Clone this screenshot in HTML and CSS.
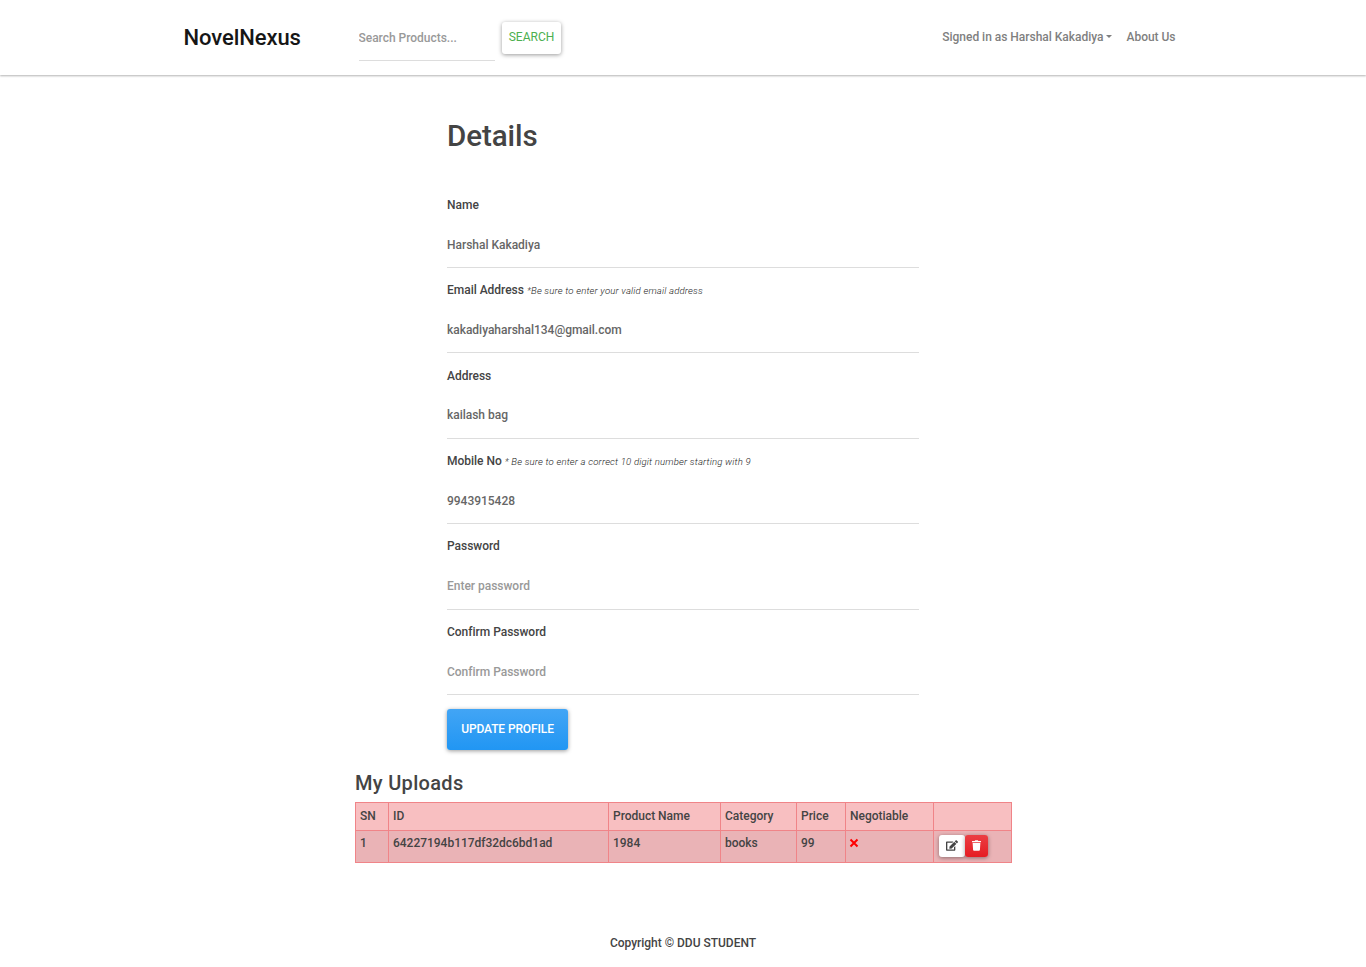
FILE: index.html
```html
<!DOCTYPE html>
<html lang="en">
<head>
<meta charset="utf-8">
<title>NovelNexus</title>
<link rel="stylesheet" href="styles.css">
</head>
<body>
<header class="navbar">
  <div class="navbar-inner">
    <a class="brand">NovelNexus</a>
    <form class="search">
      <input class="search-input" type="text" placeholder="Search Products...">
      <button class="btn search-btn" type="button">Search</button>
    </form>
    <nav class="links">
      <a class="link account">Signed in as Harshal Kakadiya</a>
      <a class="link">About Us</a>
    </nav>
  </div>
</header>
<main>
  <form class="details">
    <h1 class="title">Details</h1>
    <div class="field"><label class="label">Name</label><input class="input" type="text" value="Harshal Kakadiya"></div>
    <div class="field"><label class="label">Email Address <i class="hint">*Be sure to enter your valid email address</i></label><input class="input" type="text" value="kakadiyaharshal134@gmail.com"></div>
    <div class="field"><label class="label">Address</label><input class="input" type="text" value="kailash bag"></div>
    <div class="field"><label class="label">Mobile No <i class="hint">* Be sure to enter a correct 10 digit number starting with 9</i></label><input class="input" type="text" value="9943915428"></div>
    <div class="field"><label class="label">Password</label><input class="input" type="password" placeholder="Enter password"></div>
    <div class="field"><label class="label">Confirm Password</label><input class="input" type="password" placeholder="Confirm Password"></div>
    <button class="btn update-btn" type="button">Update Profile</button>
  </form>
  <section class="uploads">
    <h2 class="subtitle">My Uploads</h2>
    <table class="table">
      <colgroup><col class="c-sn"><col class="c-id"><col class="c-name"><col class="c-cat"><col class="c-price"><col class="c-neg"><col class="c-act"></colgroup>
      <thead><tr><th>SN</th><th>ID</th><th>Product Name</th><th>Category</th><th>Price</th><th>Negotiable</th><th></th></tr></thead>
      <tbody><tr>
        <td>1</td><td>64227194b117df32dc6bd1ad</td><td>1984</td><td>books</td><td>99</td>
        <td><svg class="cross" viewBox="0 0 10 10"><path d="M1.5 1.5 8.5 8.5M8.5 1.5 1.5 8.5"/></svg></td>
        <td><div class="actions">
          <button class="btn icon-btn edit" type="button"><svg class="edit-icon" viewBox="0 0 576 512"><path d="M402.6 83.2l90.2 90.2c3.8 3.8 3.8 10 0 13.8L274.400 405.600l-92.800 10.300c-12.400 1.400-22.900-9.100-21.500-21.500l10.300-92.800L388.800 83.200c3.800-3.800 10-3.800 13.800 0zm162-22.900l-48.800-48.800c-15.200-15.200-39.900-15.200-55.200 0l-35.400 35.400c-3.800 3.800-3.800 10 0 13.800l90.200 90.200c3.800 3.800 10 3.800 13.800 0l35.400-35.400c15.200-15.300 15.200-40 0-55.200zM384 346.200V448H64V128h229.800c3.200 0 6.200-1.300 8.500-3.500l40-40c7.600-7.600 2.200-20.500-8.500-20.500H48C21.500 64 0 85.500 0 112v352c0 26.500 21.500 48 48 48h352c26.500 0 48-21.500 48-48V306.200c0-10.700-12.900-16-20.500-8.500l-40 40c-2.200 2.300-3.500 5.300-3.500 8.500z"/></svg></button>
          <button class="btn icon-btn delete" type="button"><svg class="trash-icon" viewBox="0 0 448 512"><path d="M432 32H312l-9.400-18.700A24 24 0 0 0 281.100 0H166.800a23.700 23.700 0 0 0-21.400 13.300L136 32H16A16 16 0 0 0 0 48v32a16 16 0 0 0 16 16h416a16 16 0 0 0 16-16V48a16 16 0 0 0-16-16zM53.200 467a48 48 0 0 0 47.900 45h245.800a48 48 0 0 0 47.900-45L416 128H32z"/></svg></button>
        </div></td>
      </tr></tbody>
    </table>
  </section>
</main>
<footer class="footer">Copyright © DDU STUDENT</footer>
</body>
</html>
```

FILE: styles.css
```css
* { box-sizing: border-box; }
body { margin: 0; background: #fff; color: #444; font: 500 12px/18px Roboto, sans-serif; letter-spacing: -0.02px; }
.navbar { height: 75px; background: #fff; box-shadow: 0 1px 2px rgba(0, 0, 0, 0.3); }
.navbar-inner { width: 999px; height: 75px; margin: 0 auto; display: flex; align-items: center; }
.brand { width: 175px; color: #161616; font-size: 22px; line-height: 30px; font-weight: 500; letter-spacing: -0.08px; }
.search { display: flex; align-items: flex-start; height: 46px; margin-top: 1px; }
.search-input { width: 136px; height: 46px; margin-right: 7px; }
.search-input, .input { display: block; padding: 0; border: 0; border-radius: 0; background: transparent; color: #666; font: inherit; letter-spacing: inherit; outline: 0; box-shadow: inset 0 -1px 0 #ddd; }
.search-input::placeholder, .input::placeholder { color: #999; opacity: 1; }
.btn { border: 0; border-radius: 3px; font: 400 12px/18px Roboto, sans-serif; text-transform: uppercase; box-shadow: 0 1px 4px rgba(0, 0, 0, 0.4); padding: 0; }
.search-btn { width: 59px; height: 32px; margin-top: 7px; padding: 0 0 2px 1px; background: #fff; color: #4caf50; }
.links { display: flex; gap: 14px; margin-left: auto; margin-right: 7px; margin-top: -1px; }
.link { color: #7f7f7f; white-space: nowrap; }
.account::after { content: ""; display: inline-block; margin-left: 3px; vertical-align: 3px; border: 3px solid transparent; border-top-color: currentColor; border-bottom: 0; }
.details { width: 472px; margin: 0 auto; padding-top: 43px; }
.title { margin: 0 0 41.8px; height: 36px; font-size: 29.5px; line-height: 36px; font-weight: 500; letter-spacing: -0.06px; }
.field { height: 85.4px; }
.label { display: block; height: 18px; margin-bottom: 7.5px; }
.hint { color: #222; font-size: 9.6px; font-weight: 300; letter-spacing: 0.17px; }
.input { width: 100%; height: 46.7px; }
.update-btn { display: block; width: 121px; height: 41px; margin-top: 0.8px; background: linear-gradient(#42a5f5, #2196f3); color: #fff; font-weight: 500; letter-spacing: -0.12px; }
.uploads { width: 657px; margin: 21px 0 0 355px; }
.subtitle { margin: 0 0 7px; font-size: 20px; line-height: 24px; font-weight: 500; letter-spacing: 0.32px; }
.table { width: 657px; table-layout: fixed; border-collapse: collapse; background: #f8bfc1; }
.table th, .table td { border: 1px solid #f08488; padding: 4px 4px; text-align: left; vertical-align: top; font-weight: 500; }
.table th { height: 28px; }
.table td { height: 32px; padding-top: 3px; padding-bottom: 3px; }
.table tbody { background: #eab3b6; }
.c-sn { width: 33px; }
.c-id { width: 220px; }
.c-name { width: 112px; }
.c-cat { width: 76px; }
.c-price { width: 49px; }
.c-neg { width: 88px; }
.cross { width: 10px; height: 10px; display: block; margin: 4px 0 0 -1px; fill: none; stroke: #f00; stroke-width: 2; }
.actions { display: flex; padding-top: 1px; }
.icon-btn { height: 22px; display: flex; align-items: center; justify-content: center; }
.edit { width: 26px; margin-left: 1px; background: #fff; }
.delete { width: 23px; background: linear-gradient(#eb3e44, #e51c23); }
.edit-icon { width: 12px; height: 11px; fill: #444; }
.trash-icon { width: 9px; height: 11px; fill: #fff; }
.footer { margin-top: 71px; text-align: center; }
```
